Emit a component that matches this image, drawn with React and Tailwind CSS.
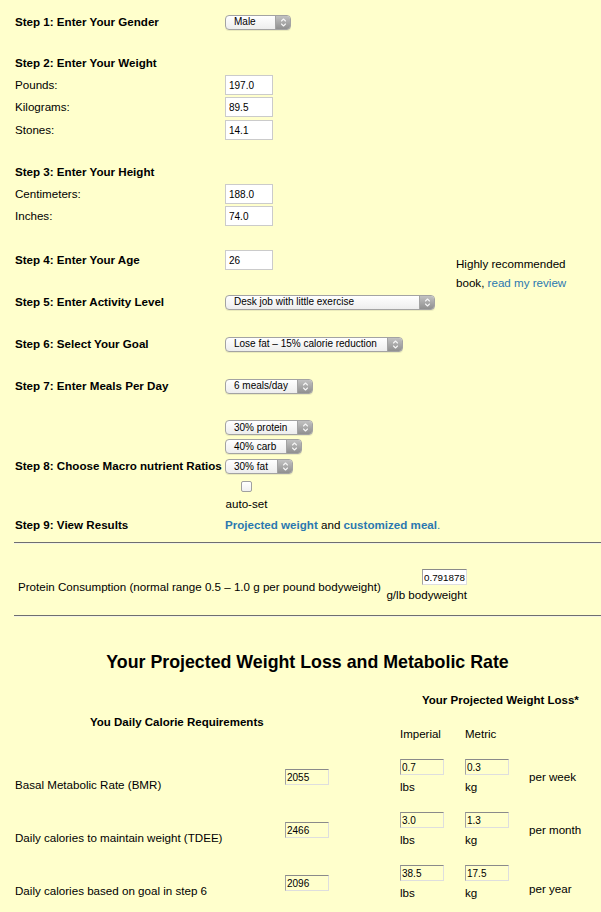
import React from "react";

const link = "text-[#2b78b0]";

function Chevrons() {
  return (
    <svg width="7" height="11" viewBox="0 0 7 11" fill="none" stroke="#f6f6f6" strokeWidth="1.1" strokeLinecap="round" strokeLinejoin="round">
      <path d="M1.5 4 L3.5 2 L5.5 4" />
      <path d="M1.5 7 L3.5 9 L5.5 7" />
    </svg>
  );
}

function Select({ className = "", children }) {
  return (
    <div className={`flex h-[15px] shrink-0 items-stretch overflow-hidden rounded-[4px] border border-[#a3a3a3] bg-linear-to-b from-white to-[#ededed] shadow-[0_1px_0_rgba(0,0,0,0.08)] ${className}`}>
      <span className="flex flex-1 items-center whitespace-nowrap pl-[8px] text-[10px] leading-none text-black">{children}</span>
      <span className="flex w-[15px] items-center justify-center border-l border-[#a3a3a3] bg-linear-to-b from-[#c2c2c2] to-[#909090]">
        <Chevrons />
      </span>
    </div>
  );
}

function Box({ value }) {
  return (
    <input
      readOnly
      value={value}
      className="h-[20px] w-[48px] shrink-0 border border-[#cbcbcb] bg-white px-[3px] text-[10px] text-black outline-none"
    />
  );
}

function Inset({ value, white, className = "w-[44px] px-[1px] text-[10px]" }) {
  return (
    <input
      readOnly
      value={value}
      className={`block h-[16px] border border-t-[#8a8a8a] border-l-[#a2a2a2] border-r-[#dedede] border-b-[#dedede] text-black outline-none ${className} ${white ? "bg-white" : "bg-transparent"}`}
    />
  );
}

function Row({ label, bold, className = "", children }) {
  return (
    <div className={`flex h-[20px] items-center ${className}`}>
      <div className={`w-[211px] shrink-0 pl-[1px] ${bold ? "font-bold" : ""}`}>{label}</div>
      {children}
    </div>
  );
}

function Hr({ className = "" }) {
  return <div className={`h-[2px] border-t border-b border-t-[#6f6f6f] border-b-[#f4f4e4] ${className}`} />;
}

const results = [
  { label: "Basal Metabolic Rate (BMR)", cal: "2055", lbs: "0.7", kg: "0.3", per: "per week", perTop: "mt-[11px]" },
  { label: "Daily calories to maintain weight (TDEE)", cal: "2466", lbs: "3.0", kg: "1.3", per: "per month", perTop: "mt-[11px]" },
  { label: "Daily calories based on goal in step 6", cal: "2096", lbs: "38.5", kg: "17.5", per: "per year", perTop: "mt-[17px]" },
];

export default function App() {
  return (
    <div className="h-[912px] overflow-hidden bg-[#ffffcc] pl-[14px] font-['Liberation_Sans',Arial,Helvetica,sans-serif] text-[11.6px] leading-[14px] text-black">
      {/* calculator steps */}
      <Row label="Step 1: Enter Your Gender" bold className="mt-[12px]">
        <Select className="w-[66px]">Male</Select>
      </Row>

      <Row label="Step 2: Enter Your Weight" bold className="mt-[21px]" />
      <Row label="Pounds:" className="mt-[2px]">
        <Box value="197.0" />
      </Row>
      <Row label="Kilograms:" className="mt-[2px]">
        <Box value="89.5" />
      </Row>
      <Row label="Stones:" className="mt-[3px]">
        <Box value="14.1" />
      </Row>

      <Row label="Step 3: Enter Your Height" bold className="mt-[22px]" />
      <Row label="Centimeters:" className="mt-[2px]">
        <Box value="188.0" />
      </Row>
      <Row label="Inches:" className="mt-[2px]">
        <Box value="74.0" />
      </Row>

      <Row label="Step 4: Enter Your Age" bold className="mt-[24px]">
        <Box value="26" />
        <div className="ml-[183px] h-[20px] self-start whitespace-nowrap pt-[4px] leading-[19px]">
          <div>Highly recommended</div>
          <div>
            book, <span className={link}>read my review</span>
          </div>
        </div>
      </Row>

      <Row label="Step 5: Enter Activity Level" bold className="mt-[22px]">
        <Select className="w-[210px]">Desk job with little exercise</Select>
      </Row>
      <Row label="Step 6: Select Your Goal" bold className="mt-[22px]">
        <Select className="w-[178px]">Lose fat – 15% calorie reduction</Select>
      </Row>
      <Row label="Step 7: Enter Meals Per Day" bold className="mt-[22px]">
        <Select className="w-[88px]">6 meals/day</Select>
      </Row>

      <div className="mt-[24px] flex items-center">
        <div className="w-[211px] shrink-0 pl-[1px] font-bold whitespace-nowrap">Step 8: Choose Macro nutrient Ratios</div>
        <div className="flex flex-col items-start">
          <Select className="w-[88px]">30% protein</Select>
          <Select className="mt-[4px] w-[77px]">40% carb</Select>
          <Select className="mt-[5px] w-[68px]">30% fat</Select>
          <div className="mt-[7px] flex w-[43px] flex-col items-center">
            <div className="h-[11px] w-[11px] rounded-[2px] border border-[#a0a0a0] bg-linear-to-b from-white to-[#f1f1f1]" />
            <div className="mt-[5px]">auto-set</div>
          </div>
        </div>
      </div>

      <Row label="Step 9: View Results" bold className="mt-[4px]">
        <div className="whitespace-nowrap">
          <span className={`${link} font-bold`}>Projected weight</span> and{" "}
          <span className={`${link} font-bold`}>customized meal</span>
          <span className={link}>.</span>
        </div>
      </Row>

      <Hr className="mt-[7px]" />

      {/* protein */}
      <div className="mt-[25px] flex items-center">
        <div className="w-[371px] shrink-0 pl-[4px] whitespace-nowrap">
          Protein Consumption (normal range 0.5 – 1.0 g per pound bodyweight)
        </div>
        <div className="flex w-[82px] flex-col items-end">
          <Inset value="0.791878" white className="w-[45px] pl-[1px] pr-0 text-[9.8px]" />
          <div className="whitespace-nowrap leading-[20px]">g/lb bodyweight</div>
        </div>
      </div>

      <Hr className="mt-[10px]" />

      {/* results */}
      <h1 className="mt-[34px] text-center text-[17.8px] leading-[22px] font-bold">
        Your Projected Weight Loss and Metabolic Rate
      </h1>

      <div className="mt-[20px] pl-[408px] text-[11.5px] font-bold whitespace-nowrap">Your Projected Weight Loss*</div>

      <div className="mt-[8px] flex items-start text-[11.5px] whitespace-nowrap">
        <div className="w-[386px] shrink-0 pl-[76px] font-bold">You Daily Calorie Requirements</div>
        <div className="mt-[12px] w-[65px] shrink-0">Imperial</div>
        <div className="mt-[12px]">Metric</div>
      </div>

      <div className="mt-[18px]">
        {results.map((r) => (
          <div key={r.label} className="flex h-[53px] items-start whitespace-nowrap">
            <div className="mt-[19px] w-[271px] shrink-0 pl-[1px]">{r.label}</div>
            <div className="mt-[10px] w-[115px] shrink-0">
              <Inset value={r.cal} />
            </div>
            <div className="w-[65px] shrink-0">
              <Inset value={r.lbs} />
              <div className="mt-[5px]">lbs</div>
            </div>
            <div className="w-[64px] shrink-0">
              <Inset value={r.kg} />
              <div className="mt-[5px]">kg</div>
            </div>
            <div className={r.perTop}>{r.per}</div>
          </div>
        ))}
      </div>
    </div>
  );
}
